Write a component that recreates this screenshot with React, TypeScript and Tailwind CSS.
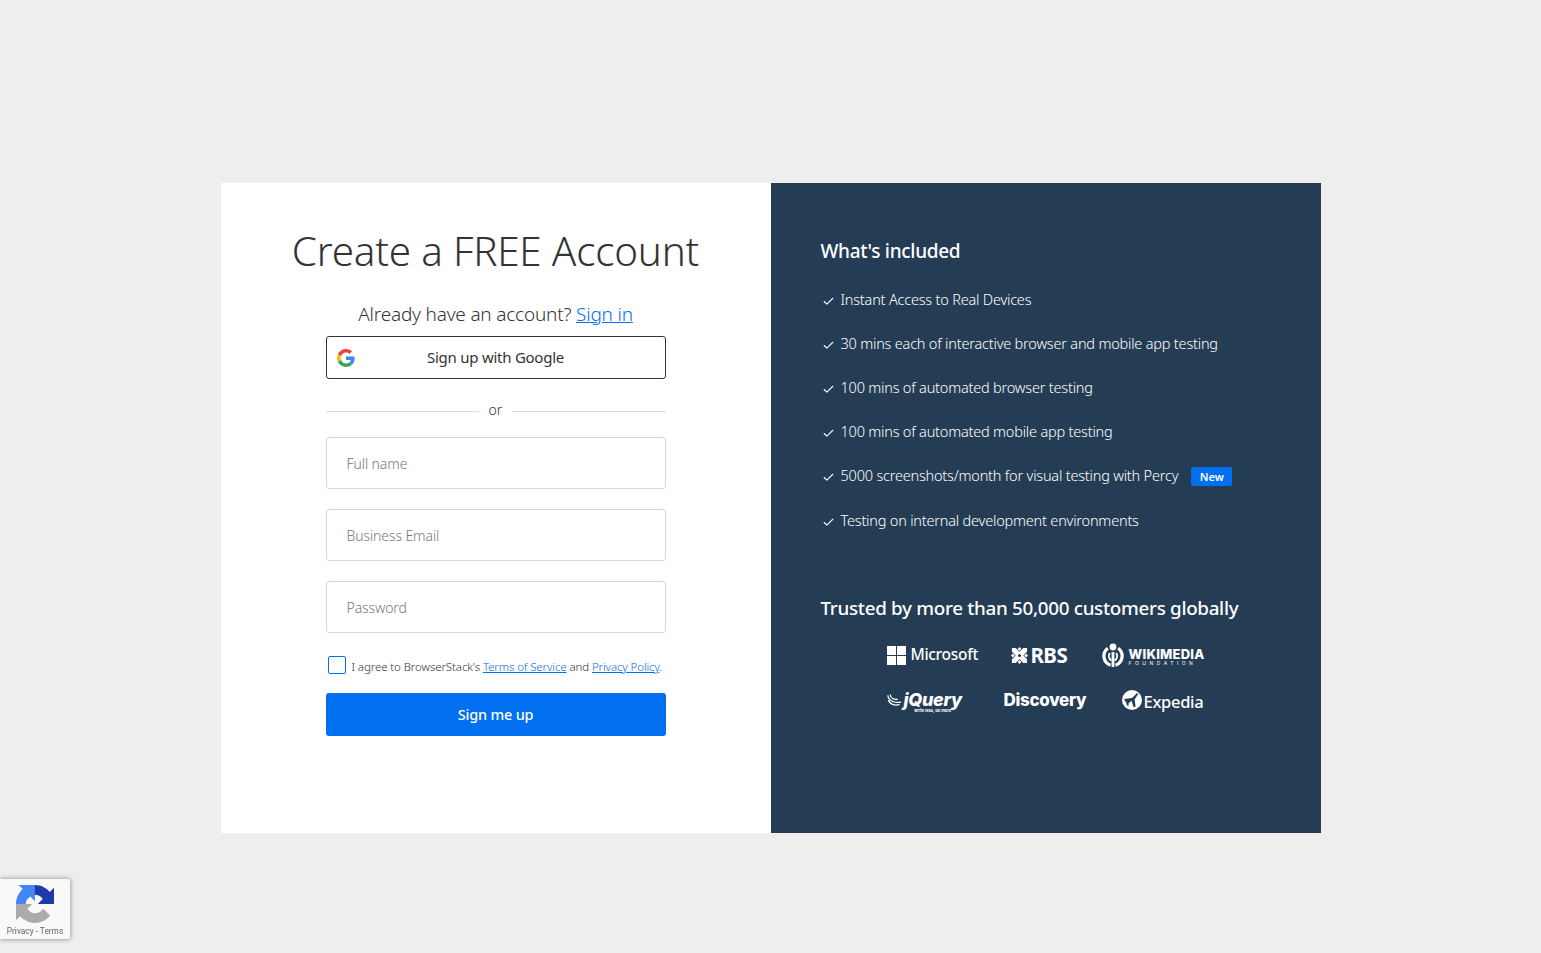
import { Check } from "lucide-react";

const features = [
  "Instant Access to Real Devices",
  "30 mins each of interactive browser and mobile app testing",
  "100 mins of automated browser testing",
  "100 mins of automated mobile app testing",
  "5000 screenshots/month for visual testing with Percy",
  "Testing on internal development environments",
];

const font = "font-['Noto_Sans',sans-serif]";

function GoogleIcon() {
  return (
    <svg viewBox="0 0 48 48" className="h-[18px] w-[18px]">
      <path fill="#EA4335" d="M24 9.5c3.54 0 6.71 1.22 9.21 3.6l6.85-6.85C35.9 2.38 30.47 0 24 0 14.62 0 6.51 5.38 2.56 13.22l7.98 6.19C12.43 13.72 17.74 9.5 24 9.5z" />
      <path fill="#4285F4" d="M46.98 24.55c0-1.57-.15-3.09-.38-4.55H24v9.02h12.94c-.58 2.96-2.26 5.48-4.78 7.18l7.73 6c4.51-4.18 7.09-10.36 7.09-17.65z" />
      <path fill="#FBBC05" d="M10.53 28.59c-.48-1.45-.76-2.99-.76-4.59s.27-3.14.76-4.59l-7.98-6.19C.92 16.46 0 20.12 0 24c0 3.88.92 7.54 2.56 10.78l7.97-6.19z" />
      <path fill="#34A853" d="M24 48c6.48 0 11.93-2.13 15.89-5.81l-7.73-6c-2.15 1.45-4.92 2.3-8.16 2.3-6.26 0-11.57-4.22-13.47-9.91l-7.98 6.19C6.51 42.62 14.62 48 24 48z" />
    </svg>
  );
}

function TextInput({ placeholder }: { placeholder: string }) {
  return (
    <input
      placeholder={placeholder}
      className="h-[52px] w-full rounded-[3px] border border-[#d5d5d5] bg-white px-5 text-[14px] font-light tracking-[-0.1px] text-[#333] outline-none placeholder:text-[#777]"
    />
  );
}

function MicrosoftLogo() {
  return (
    <div className="flex h-5 w-[91px] items-center gap-[5px]">
      <div className="grid h-[19px] w-[19px] shrink-0 grid-cols-2 gap-px">
        <span className="bg-white" />
        <span className="bg-white" />
        <span className="bg-white" />
        <span className="bg-white" />
      </div>
      <span className="text-[15.500px] font-medium tracking-[-0.3px] text-white">Microsoft</span>
    </div>
  );
}

function RbsLogo() {
  return (
    <div className="flex h-5 w-[57px] items-center gap-[3px]">
      <svg viewBox="0 0 18 18" className="h-[17px] w-[17px] shrink-0" fill="white">
        <path d="M1 1h4l4 4 4-4h4v4l-4 4 4 4v4h-4l-4-4-4 4H1v-4l4-4-4-4z" />
        <path d="M9 0l2 2-2 2-2-2zM9 14l2 2-2 2-2-2zM0 9l2-2 2 2-2 2zM14 9l2-2 2 2-2 2z" />
        <circle cx="9" cy="9" r="1.6" fill="#243d55" />
      </svg>
      <span className="text-[20.500px] leading-none font-bold tracking-[-0.6px] text-white">RBS</span>
    </div>
  );
}

function WikimediaLogo() {
  return (
    <div className="flex h-6 w-[103px] items-center gap-[4px]">
      <svg viewBox="0 0 24 24" className="h-[24px] w-[24px] shrink-0" fill="none" stroke="white">
        <circle cx="12" cy="4" r="3.4" fill="white" stroke="none" />
        <path d="M6.800 5.200A9.800 9.800 0 0 0 9.500 22.300" strokeWidth="3.2" />
        <path d="M17.200 5.200A9.800 9.800 0 0 1 14.500 22.300" strokeWidth="3.2" />
        <path d="M8.800 10a5.500 5.500 0 0 0 1.500 7.500" strokeWidth="2" />
        <path d="M15.200 10a5.500 5.500 0 0 1-1.500 7.500" strokeWidth="2" />
        <path d="M12 9v15" strokeWidth="2.800" />
      </svg>
      <div className="flex flex-col pt-[5px] font-['Inter',sans-serif]">
        <span className="text-[13px] leading-[11px] font-extrabold tracking-[0.2px] whitespace-nowrap text-white">WIKIMEDIA</span>
        <span className="text-[5px] leading-[7px] tracking-[3.500px] whitespace-nowrap text-white">FOUNDATION</span>
      </div>
    </div>
  );
}

function JqueryLogo() {
  return (
    <div className="flex h-6 w-[75px] items-center gap-[2px]">
      <svg viewBox="0 0 16 14" className="h-[14px] w-[15px] shrink-0" fill="none" stroke="white" strokeWidth="1.3">
        <path d="M1 2c0 5 6 9 14 7" />
        <path d="M3.500 1c0 4 4 6 8 5" />
        <path d="M1.500 7c1 4 7 7 12 4.500" />
      </svg>
      <div className="flex flex-col items-center pt-[3px] font-['Inter',sans-serif]">
        <span className="text-[18px] leading-[17px] font-extrabold tracking-[-0.3px] text-white italic">jQuery</span>
        <span className="text-[4px] leading-[5px] font-bold text-white">write less, do more</span>
      </div>
    </div>
  );
}

function ExpediaLogo() {
  return (
    <div className="flex h-6 w-[81px] items-center gap-[2px]">
      <svg viewBox="0 0 20 20" className="h-5 w-5 shrink-0">
        <circle cx="10" cy="10" r="10" fill="white" />
        <path d="M2 9l8-1 5-5 1.200 1-3.600 5.500 1 7-2 .8-2-6.500-3 2.500v2.200L5.500 16 4 12.500z" fill="#243d55" />
      </svg>
      <span className="pt-1 text-[16.500px] font-medium tracking-[-0.3px] text-white">Expedia</span>
    </div>
  );
}

function RecaptchaBadge() {
  return (
    <div className="fixed bottom-[14px] left-0 flex h-[60px] w-[70px] flex-col items-center rounded-r-[2px] bg-[#f9f9f9] shadow-[0_0_5px_rgba(0,0,0,0.45)]">
      <svg viewBox="0 0 64 64" className="mt-[6px] h-[38px] w-[38px]">
        <path fill="#1c3aa9" d="M64 31.955l-.033-1.37V4.687l-7.160 7.160C50.948 4.674 42.033.093 32.050.093c-10.400 0-19.622 4.960-25.458 12.640l11.736 11.860a15.550 15.550 0 0 1 4.754-5.334c2.050-1.600 4.952-2.906 8.968-2.906.485 0 .860.057 1.135.163 4.976.393 9.288 3.140 11.828 7.124l-8.307 8.307 32.294.008" />
        <path fill="#4285f4" d="M31.862.094l-1.370.033H4.594l7.160 7.160C4.580 13.147 0 22.060 0 32.046c0 10.400 4.960 19.622 12.640 25.458l11.860-11.736a15.550 15.550 0 0 1-5.334-4.754c-1.600-2.050-2.906-4.952-2.906-8.968 0-.485.057-.860.163-1.135.393-4.976 3.140-9.288 7.124-11.828l8.307 8.307.008-32.294" />
        <path fill="#ababab" d="M.001 32.045l.033 1.370v25.898l7.160-7.160C13.053 59.326 21.968 63.907 31.950 63.907c10.400 0 19.622-4.960 25.458-12.640l-11.736-11.860a15.550 15.550 0 0 1-4.754 5.334c-2.050 1.600-4.952 2.906-8.968 2.906-.485 0-.860-.057-1.135-.163-4.976-.393-9.288-3.140-11.828-7.124l8.307-8.307L.001 32.045" />
      </svg>
      <p className="mt-[3px] font-['Roboto',sans-serif] text-[8.300px] leading-[10px] text-[#666]">Privacy - Terms</p>
    </div>
  );
}

export default function App() {
  return (
    <div className={`min-h-[953px] bg-[#eeeeee] pt-[183px] ${font}`}>
      <main className="mx-auto flex h-[650px] w-[1100px]">
        <section className="flex w-[550px] flex-col items-center bg-white">
          <h1 className="mt-[41px] text-[40.400px] leading-[54px] font-light tracking-[-0.2px] text-[#333]">Create a FREE Account</h1>
          <p className="mt-[23px] text-[19px] leading-[26px] font-light tracking-[-0.2px] text-[#333]">
            Already have an account?{" "}
            <a className="text-[#0070f0] underline">Sign in</a>
          </p>
          <div className="mt-[9px] flex w-[340px] flex-col">
            <button className="relative flex h-[43px] items-center justify-center rounded-[3px] border border-[#333] bg-white pb-px text-[15px] tracking-[-0.25px] text-[#333]">
              <span className="absolute left-[10px] pt-px"><GoogleIcon /></span>
              Sign up with Google
            </button>
            <div className="mt-[21px] flex items-center gap-[10px] text-[14px] leading-[20px] font-light text-[#333]">
              <span className="mt-[2px] h-px flex-1 bg-[#dcdcdc]" />
              or
              <span className="mt-[2px] h-px flex-1 bg-[#dcdcdc]" />
            </div>
            <div className="mt-[17px] flex flex-col gap-5">
              <TextInput placeholder="Full name" />
              <TextInput placeholder="Business Email" />
              <TextInput placeholder="Password" />
            </div>
            <label className="mt-[23px] flex items-start gap-[6px] pl-[2px] text-[11.500px] leading-[18px] font-light tracking-[-0.1px] text-[#333]">
              <span className="h-[18px] w-[18px] shrink-0 rounded-[2px] border border-[#0070f0]" />
              <span className="pt-[2px]">
                I agree to BrowserStack's <a className="text-[#0070f0] underline">Terms of Service</a> and{" "}
                <a className="text-[#0070f0] underline">Privacy Policy</a>.
              </span>
            </label>
            <button className="mt-[17px] h-[43px] rounded-[3px] bg-[#0070f0] text-[14.500px] font-medium tracking-[-0.2px] text-white">Sign me up</button>
          </div>
        </section>

        <section className="w-[550px] bg-[#243d55] pt-[54px] pl-[50px] text-white">
          <h2 className="text-[19px] leading-[28px] font-medium tracking-[-0.3px]">What's included</h2>
          <ul className="mt-[13px] flex flex-col">
            {features.map((item, index) => (
              <li key={item} className={`flex h-[44px] items-center gap-[7px] text-[14.500px] font-light tracking-[-0.2px] ${index === 4 ? "mb-px" : ""}`}>
                <Check className="h-[13px] w-[13px] shrink-0 translate-x-px translate-y-px text-white" strokeWidth={2} />
                <span>{item}</span>
                {index === 4 ? (
                  <span className="ml-[6px] rounded-[2px] bg-[#0070f0] px-[8.500px] py-[2px] text-[11px] leading-[15px] font-semibold tracking-normal">New</span>
                ) : null}
              </li>
            ))}
          </ul>
          <h2 className="mt-[51px] text-[18.800px] leading-[28px] font-medium tracking-[-0.3px]">Trusted by more than 50,000 customers globally</h2>
          <div className="mt-[21px] flex items-center gap-[33px] pl-[66px]">
            <MicrosoftLogo />
            <RbsLogo />
            <WikimediaLogo />
          </div>
          <div className="mt-[21px] flex items-center gap-[42px] pl-[66px]">
            <JqueryLogo />
            <span className="w-[83px] font-['Inter',sans-serif] text-[17px] leading-6 font-extrabold tracking-[-0.3px] whitespace-nowrap text-white">Discovery</span>
            <div className="-ml-[7px]"><ExpediaLogo /></div>
          </div>
        </section>
      </main>
      <RecaptchaBadge />
    </div>
  );
}
